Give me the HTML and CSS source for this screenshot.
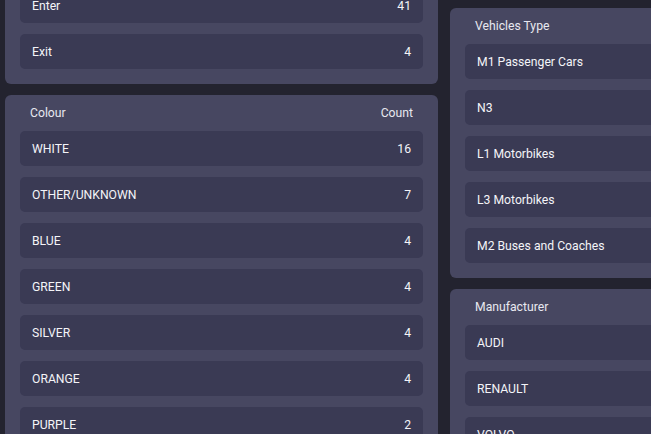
FILE: index.html
```html
<!DOCTYPE html>
<html lang="en">
<head>
<meta charset="utf-8">
<title>Vehicle stats</title>
<meta name="viewport" content="width=device-width,initial-scale=1">
<link rel="stylesheet" href="styles.css">
</head>
<body>

<div class="page">
  <!-- ===== left column ===== -->
  <div class="col">
    <section class="panel">
      <div class="panel-head"><span>Direction</span><span>Count</span></div>
      <div class="row"><span>Enter</span><span>41</span></div>
      <div class="row"><span>Exit</span><span>4</span></div>
    </section>

    <section class="panel">
      <div class="panel-head"><span>Colour</span><span>Count</span></div>
      <div class="row"><span>WHITE</span><span>16</span></div>
      <div class="row"><span>OTHER/UNKNOWN</span><span>7</span></div>
      <div class="row"><span>BLUE</span><span>4</span></div>
      <div class="row"><span>GREEN</span><span>4</span></div>
      <div class="row"><span>SILVER</span><span>4</span></div>
      <div class="row"><span>ORANGE</span><span>4</span></div>
      <div class="row"><span>PURPLE</span><span>2</span></div>
    </section>
  </div>

  <!-- ===== right column ===== -->
  <div class="col col-right">
    <section class="panel">
      <div class="panel-head"><span>Vehicles Type</span><span>Count</span></div>
      <div class="row"><span>M1 Passenger Cars</span><span>38</span></div>
      <div class="row"><span>N3</span><span>3</span></div>
      <div class="row"><span>L1 Motorbikes</span><span>2</span></div>
      <div class="row"><span>L3 Motorbikes</span><span>1</span></div>
      <div class="row"><span>M2 Buses and Coaches</span><span>1</span></div>
    </section>

    <section class="panel">
      <div class="panel-head"><span>Manufacturer</span><span>Count</span></div>
      <div class="row"><span>AUDI</span><span>9</span></div>
      <div class="row"><span>RENAULT</span><span>6</span></div>
      <div class="row"><span>VOLVO</span><span>5</span></div>
    </section>
  </div>
</div>

</body>
</html>
```

FILE: styles.css
```css
/* ---------- Base ---------- */
*{margin:0;padding:0;box-sizing:border-box}
html,body{height:100%;overflow:hidden;background:#23232f;color:#f4f4f8;
  font-family:Roboto,Lato,Arial,sans-serif;font-size:12.2px}
/* ---------- Layout ---------- */
.page{display:grid;grid-template-columns:433px 433px;column-gap:12px;padding-left:5px;margin-top:-48px}
.col{display:flex;flex-direction:column;gap:11px}
.col-right{padding-top:56px}
/* ---------- Panels ---------- */
.panel{background:#474761;border-radius:6px;padding:0 15px 15px;display:flex;flex-direction:column;gap:11px}
.panel-head{height:36px;margin-bottom:-11px;display:flex;justify-content:space-between;align-items:center;
  padding:0 10px;color:#e8e8f0}
/* ---------- Rows ---------- */
.row{height:35px;background:#3a3a54;border-radius:5px;display:flex;justify-content:space-between;
  align-items:center;padding:0 12px}
```
